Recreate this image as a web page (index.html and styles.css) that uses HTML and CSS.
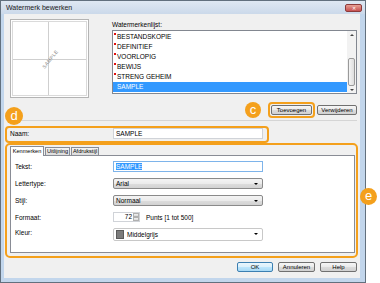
FILE: index.html
```html
<!DOCTYPE html>
<html lang="nl">
<head>
  <meta charset="UTF-8">
  <title>Watermerk bewerken</title>
  <link rel="stylesheet" href="styles.css">
</head>
<body>

<div class="window">
  <div class="titlebar">
    <span class="title">Watermerk bewerken</span>
    <span class="close">&#x2715;</span>
  </div>

  <div class="content">
    <div class="top">
      <div class="preview"><span class="wm">SAMPLE</span></div>
      <div class="listcol">
        <div class="label">Watermerkenlijst:</div>
        <div class="listbox">
          <ul class="items">
            <li class="sys">BESTANDSKOPIE</li>
            <li class="sys">DEFINITIEF</li>
            <li class="sys">VOORLOPIG</li>
            <li class="sys">BEWIJS</li>
            <li class="sys">STRENG GEHEIM</li>
            <li class="sel">SAMPLE</li>
          </ul>
          <div class="scroll">
            <span class="arrow up"></span>
            <span class="thumb"></span>
            <span class="arrow down"></span>
          </div>
        </div>
      </div>
    </div>

    <div class="actions">
      <span class="hl-btn"><button class="btn w-add">Toevoegen</button></span>
      <button class="btn w-del">Verwijderen</button>
    </div>
    <div class="sep"></div>

    <div class="name-box">
      <span class="field-label">Naam:</span>
      <div class="textbox">SAMPLE</div>
    </div>

    <div class="props">
      <div class="tabs">
        <span class="tab active t1">Kenmerken</span>
        <span class="tab t2">Uitlijning</span>
        <span class="tab t3">Afdrukstijl</span>
      </div>
      <div class="panel">
        <div class="row">
          <span class="row-label">Tekst:</span>
          <div class="textbox focus"><span class="selected">SAMPLE</span></div>
        </div>
        <div class="row">
          <span class="row-label">Lettertype:</span>
          <div class="select">Arial</div>
        </div>
        <div class="row">
          <span class="row-label">Stijl:</span>
          <div class="select">Normaal</div>
        </div>
        <div class="row">
          <span class="row-label">Formaat:</span>
          <div class="spin"><span class="spin-val">72</span><span class="spin-btns"><i></i><i></i></span></div>
          <span class="hint">Punts [1 tot 500]</span>
        </div>
        <div class="row row-top">
          <span class="row-label">Kleur:</span>
          <div class="select plain"><span class="swatch"></span>Middelgrijs</div>
        </div>
      </div>
    </div>

    <div class="footer">
      <button class="btn default w-ok">OK</button>
      <button class="btn w-foot">Annuleren</button>
      <button class="btn w-foot">Help</button>
    </div>

    <span class="badge badge-c">c</span>
    <span class="badge badge-d">d</span>
    <span class="badge badge-e">e</span>
  </div>
</div>

</body>
</html>
```

FILE: styles.css
```css
body { margin: 0; background: #fff; font-family: "Liberation Sans", Arial, sans-serif; font-size: 6.5px; color: #000; }

.window {
  width: 366px; height: 283px; box-sizing: border-box;
  border: 1px solid #62707e; background: #c2d6ec;
  padding: 0 5px 4px 3px; display: flex; flex-direction: column;
}
.titlebar {
  height: 13px; display: flex; align-items: center; justify-content: space-between;
  margin: 0 -5px 0 -3px; padding: 0 3px 0 5px;
  background: linear-gradient(#dfe8f3, #cbd9ea);
}
.title { font-size: 7px; color: #1a1a1a; }
.close {
  width: 17px; height: 8px; box-sizing: border-box; border: 1px solid #8c3a3a; border-radius: 2px;
  background: linear-gradient(#e8a094, #c75050); color: #fff; font-size: 5px; line-height: 6px; text-align: center;
}

.content { flex: 1; background: #f0f0f0; position: relative; }

.top { display: flex; align-items: flex-start; padding: 5px 0 0 6px; }
.preview {
  width: 79px; height: 79px; box-sizing: border-box; position: relative;
  border: 1px solid #b4b4b4; box-shadow: inset 0 0 0 1px #fff, inset 0 0 0 2px #dadada;
  background:
    linear-gradient(#cfcfcf, #cfcfcf) 37px 0 / 1px 100% no-repeat,
    linear-gradient(#cfcfcf, #cfcfcf) 0 39px / 100% 1px no-repeat,
    #fff;
}
.wm {
  position: absolute; left: 50%; top: 50%;
  transform: translate(-50%, -50%) rotate(-52deg);
  font-size: 5px; color: #8a8a8a; letter-spacing: 0.3px;
}

.listcol { margin-left: 23px; width: 245px; }
.label { line-height: 11px; }
.listbox { height: 64px; box-sizing: border-box; border: 1px solid #828790; background: #fff; display: flex; }
.items { flex: 1; list-style: none; margin: 0; padding: 1px 0 0; }
.items li { height: 10px; line-height: 10px; padding-left: 4px; position: relative; }
.items li.sys::before { content: ""; position: absolute; left: 1px; top: 1px; width: 2px; height: 2px; background: #e01010; }
.items li.sel { background: #3399ff; color: #fff; }
.scroll { width: 9px; display: flex; flex-direction: column; align-items: center; background: #f2f2f2; padding: 3px 0 2px; box-sizing: border-box; }
.arrow { width: 0; height: 0; border-left: 2px solid transparent; border-right: 2px solid transparent; }
.arrow.up { border-bottom: 2px solid #444; }
.arrow.down { border-top: 2px solid #444; margin-top: 3px; }
.thumb {
  width: 7px; height: 28px; margin-top: auto; box-sizing: border-box;
  border: 1px solid #9a9a9a; border-radius: 2px;
  background: linear-gradient(90deg, #f4f4f4, #dedede);
}

.actions { display: flex; justify-content: flex-end; align-items: center; gap: 2px; margin-top: 4px; padding-right: 3px; }
.hl-btn { display: flex; border: 2px solid #f4a01c; border-radius: 4px; padding: 1px; }
.btn {
  height: 10px; padding: 0; font-family: inherit; font-size: 6px; line-height: 8px; color: #000;
  border: 1px solid #707070; border-radius: 2px;
  background: linear-gradient(#f6f6f6, #e9e9e9 50%, #dcdcdc 50%, #d0d0d0);
}
.btn.default { border-color: #3c7fb1; background: linear-gradient(#eaf6fd, #d9f0fc 50%, #bee6fd 50%, #a7d9f5); }
.w-add { width: 41px; }
.w-del { width: 40px; }
.w-ok { width: 36px; }
.w-foot { width: 37px; }
.sep { height: 1px; background: #d5d5d5; margin: 2px 3px 0 6px; }

.name-box {
  margin: 5px 91px 0 1px; height: 17px; box-sizing: border-box;
  border: 2px solid #f4a01c; border-radius: 4px;
  display: flex; align-items: flex-start; padding: 0 3px;
}
.name-box .field-label { width: 103px; line-height: 11px; }
.textbox {
  width: 150px; height: 11px; box-sizing: border-box; border: 1px solid #d0d3d8; background: #fff;
  padding-left: 2px; line-height: 9px;
}
.textbox.focus { border-color: #7eb4ea; }
.selected { background: #3399ff; color: #fff; }

.props {
  margin: 0 2px 0 1px; height: 115px; box-sizing: border-box;
  border: 2px solid #f4a01c; border-radius: 5px;
  padding: 1px 1px 3px 3px; display: flex; flex-direction: column;
}
.tabs { display: flex; align-items: flex-end; height: 9px; gap: 1px; }
.tab {
  height: 8px; box-sizing: border-box; border: 1px solid #898c95; border-bottom: none;
  font-size: 5.6px; line-height: 7px; text-align: center; white-space: nowrap;
  background: linear-gradient(#f4f4f4, #dcdcdc);
}
.tab.active { height: 10px; background: #fff; margin-bottom: -1px; position: relative; z-index: 1; line-height: 9px; }
.t1 { width: 34px; }
.t2 { width: 25px; }
.t3 { width: 28px; }
.panel { flex: 1; border: 1px solid #898c95; background: #fff; padding: 5px 0 0 4px; }

.row { display: flex; align-items: center; }
.row + .row { margin-top: 6px; }
.row-top { align-items: flex-start; }
.row-label { width: 98px; }
.row-top .row-label { line-height: 9px; }
.select {
  width: 150px; height: 11px; box-sizing: border-box; position: relative;
  border: 1px solid #8a8a8a; border-radius: 2px; padding-left: 2px; line-height: 9px;
  background: linear-gradient(#f4f4f4, #ebebeb 50%, #dddddd 50%, #d2d2d2);
  display: flex; align-items: center;
}
.select::after {
  content: ""; position: absolute; right: 4px; top: 4px;
  border-left: 2px solid transparent; border-right: 2px solid transparent; border-top: 2px solid #000;
}
.select.plain { height: 13px; background: #fff; border-color: #c8c8c8; }
.swatch { width: 8px; height: 9px; background: #7b7b7b; border: 1px solid #5a5a5a; box-sizing: border-box; margin-right: 3px; }
.spin {
  width: 27px; height: 10px; box-sizing: border-box; border: 1px solid #d0d3d8; background: #fff;
  display: flex; justify-content: flex-end; align-items: stretch;
}
.spin-val { line-height: 8px; padding-right: 1px; }
.spin-btns { width: 6px; display: flex; flex-direction: column; }
.spin-btns i { flex: 1; border: 1px solid #b0b0b0; background: linear-gradient(#f2f2f2, #d8d8d8); }
.hint { margin-left: 6px; }

.footer { display: flex; justify-content: flex-end; gap: 5px; margin-top: 4px; padding-right: 3px; }

.badge {
  position: absolute; border-radius: 50%; background: #f4a01c; color: #fff;
  font-size: 13px; text-align: center;
}
.badge-c { left: 241px; top: 88px; width: 16px; height: 16px; line-height: 15px; }
.badge-d { left: 1px; top: 93px; width: 18px; height: 18px; line-height: 17px; }
.badge-e { left: 356px; top: 174px; width: 17px; height: 17px; line-height: 16px; }
```
